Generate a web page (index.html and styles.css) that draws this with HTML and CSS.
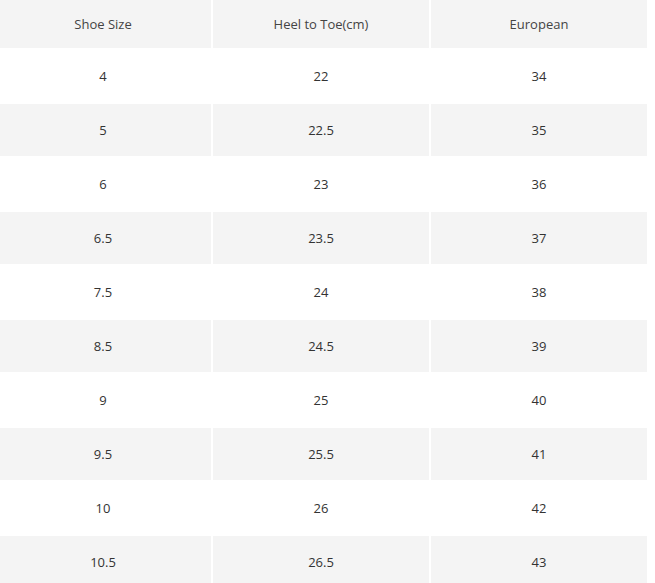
FILE: index.html
```html
<!DOCTYPE html>
<html>
<head>
<meta charset="utf-8">
<link rel="stylesheet" href="styles.css">
</head>
<body>
<table class="size-table">
  <thead>
    <tr><th>Shoe Size</th><th>Heel to Toe(cm)</th><th>European</th></tr>
  </thead>
  <tbody>
    <tr><td>4</td><td>22</td><td>34</td></tr>
    <tr><td>5</td><td>22.5</td><td>35</td></tr>
    <tr><td>6</td><td>23</td><td>36</td></tr>
    <tr><td>6.5</td><td>23.5</td><td>37</td></tr>
    <tr><td>7.5</td><td>24</td><td>38</td></tr>
    <tr><td>8.5</td><td>24.5</td><td>39</td></tr>
    <tr><td>9</td><td>25</td><td>40</td></tr>
    <tr><td>9.5</td><td>25.5</td><td>41</td></tr>
    <tr><td>10</td><td>26</td><td>42</td></tr>
    <tr><td>10.5</td><td>26.5</td><td>43</td></tr>
  </tbody>
</table>
</body>
</html>
```
FILE: styles.css
```css
html, body {
  margin: 0;
  padding: 0;
  background: #ffffff;
  overflow: hidden;
}
.size-table {
  border-collapse: separate;
  border-spacing: 2px;
  margin: -2px 0 0 -7px;
  table-layout: fixed;
  width: 656px;
  font-family: "Open Sans", sans-serif;
  font-size: 13px;
  color: #333333;
}
.size-table th,
.size-table td {
  width: 216px;
  padding: 0;
  text-align: center;
  vertical-align: middle;
  box-sizing: border-box;
}
.size-table th {
  height: 48px;
  font-weight: normal;
  color: #444444;
  background: #f4f4f4;
}
.size-table td {
  height: 52px;
}
.size-table tbody tr:nth-child(even) td {
  background: #f4f4f4;
}
```
